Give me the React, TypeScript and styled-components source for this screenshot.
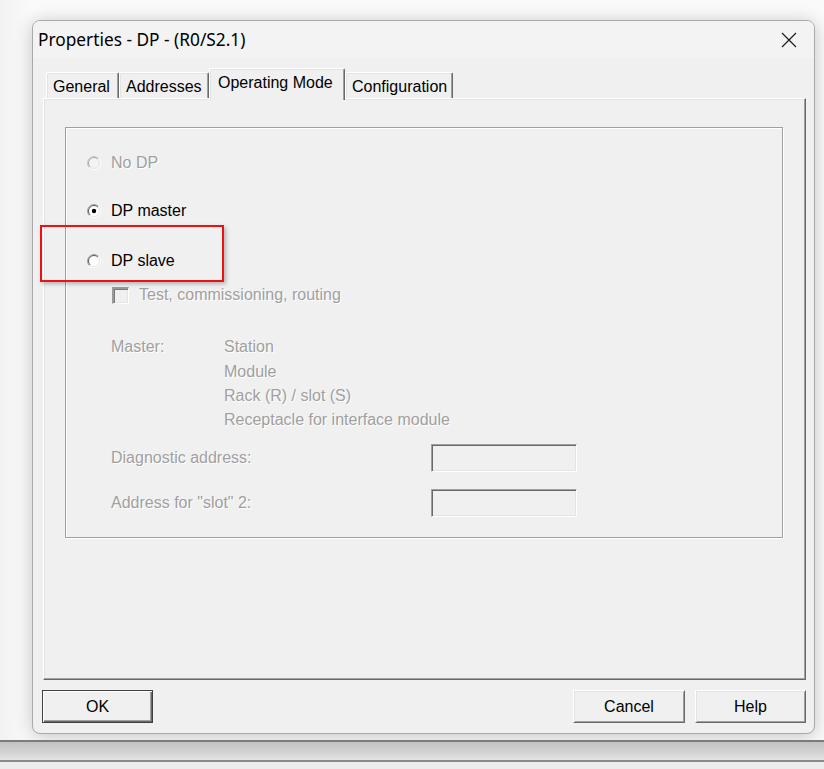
import React from "react";
import styled, { createGlobalStyle } from "styled-components";

const Global = createGlobalStyle`
  html, body { margin: 0; padding: 0; }
  body {
    background: #f8f8f8;
    font-family: "Liberation Sans", Arial, sans-serif;
    font-size: 16px;
    color: #000;
    overflow: hidden;
  }
`;

const Page = styled.div`
  width: 824px;
  height: 769px;
  display: flex;
  flex-direction: column;
  background: linear-gradient(90deg, #f2f2f2 0px, #fafafa 30px);
`;

const Stage = styled.div`
  padding: 20px 9px 0 32px;
  display: flex;
`;

const Window = styled.div`
  width: 783px;
  height: 714px;
  box-sizing: border-box;
  border: 1px solid #a9a9a9;
  border-radius: 8px;
  background: #f0f0f0;
  box-shadow: 0 2px 18px rgba(0, 0, 0, 0.22);
  display: flex;
  flex-direction: column;
  overflow: hidden;
`;

const TitleBar = styled.div`
  height: 37px;
  flex: none;
  background: #f3f3f3;
  display: flex;
  align-items: center;
  padding-left: 5px;
`;

const Title = styled.div`
  font-family: "Noto Sans", "Open Sans", sans-serif;
  font-size: 17.3px;
  color: #000;
  flex: 1;
  margin-top: -1px;
`;

const CloseBox = styled.div`
  width: 50px;
  height: 37px;
  display: flex;
  align-items: center;
  justify-content: center;
`;

const Body = styled.div`
  flex: 1;
  display: flex;
  flex-direction: column;
  padding: 10px 8px 0 10px;
`;

const TabStrip = styled.div`
  display: flex;
  align-items: flex-end;
  height: 30px;
  padding-left: 3px;
  position: relative;
  z-index: 1;
`;

const Tab = styled.div<{ $w: number; $active?: boolean }>`
  width: ${(p) => p.$w}px;
  box-sizing: border-box;
  height: ${(p) => (p.$active ? 32 : 26)}px;
  margin-bottom: ${(p) => (p.$active ? -2 : 0)}px;
  background: #f0f0f0;
  border-top: 1px solid #ffffff;
  border-left: 1px solid #ffffff;
  border-right: 1px solid #696969;
  border-radius: 2px 2px 0 0;
  box-shadow: inset -1px 0 0 #a0a0a0, inset 1px 1px 0 #e3e3e3;
  padding: ${(p) => (p.$active ? "4px 0 0 8px" : "4px 0 0 6px")};
  font-size: 16px;
  line-height: 20px;
  white-space: nowrap;
  color: #000;
`;

const Panel = styled.div`
  height: 582px;
  box-sizing: border-box;
  border-top: 1px solid #ffffff;
  border-left: 1px solid #ffffff;
  border-right: 1px solid #696969;
  border-bottom: 1px solid #696969;
  box-shadow: inset -1px -1px 0 #a0a0a0, inset 1px 1px 0 #e3e3e3;
  padding: 28px 22px 0 21px;
`;

const Group = styled.div`
  position: relative;
  height: 411px;
  box-sizing: border-box;
  border: 1px solid #a0a0a0;
  box-shadow: 1px 1px 0 #ffffff, inset 1px 1px 0 #ffffff;
  padding: 25px 0 0 21px;
  display: flex;
  flex-direction: column;
`;

const Row = styled.div<{ $mt?: number; $ml?: number; $gap?: number }>`
  display: flex;
  align-items: center;
  height: 20px;
  margin-top: ${(p) => p.$mt ?? 0}px;
  margin-left: ${(p) => p.$ml ?? 0}px;
  gap: ${(p) => p.$gap ?? 10}px;
`;

const Label = styled.span<{ $disabled?: boolean }>`
  font-size: 16px;
  line-height: 20px;
  white-space: nowrap;
  color: ${(p) => (p.$disabled ? "#a0a0a0" : "#000")};
  text-shadow: ${(p) => (p.$disabled ? "1px 1px 0 #ffffff" : "none")};
`;

const CheckBox = styled.div`
  width: 17px;
  height: 17px;
  box-sizing: border-box;
  border-top: 2px solid #9a9a9a;
  border-left: 2px solid #9a9a9a;
  border-right: 1px solid #ffffff;
  border-bottom: 1px solid #ffffff;
  box-shadow: inset 1px 1px 0 #7a7a7a, inset -1px -1px 0 #e3e3e3;
  background: #f0f0f0;
`;

const MasterGrid = styled.div`
  display: grid;
  grid-template-columns: 113px auto;
  grid-template-rows: 24px 25px 24px 24px;
  align-items: center;
  margin: 30px 0 0 24px;
`;

const FieldGrid = styled.div`
  display: grid;
  grid-template-columns: 320px 146px;
  grid-auto-rows: 28px;
  row-gap: 17px;
  align-items: center;
  margin: 12px 0 0 24px;
`;

const FieldBox = styled.div`
  width: 146px;
  height: 28px;
  box-sizing: border-box;
  border-top: 1px solid #a0a0a0;
  border-left: 1px solid #a0a0a0;
  border-right: 1px solid #ffffff;
  border-bottom: 1px solid #ffffff;
  box-shadow: inset 1px 1px 0 #696969, inset -1px -1px 0 #e3e3e3;
  background: #f0f0f0;
`;

const Highlight = styled.div`
  position: absolute;
  left: -26px;
  top: 97px;
  width: 184px;
  height: 57px;
  box-sizing: border-box;
  border: 2px solid #f01010;
  box-shadow: 2px 2px 4px rgba(0, 0, 0, 0.25);
  pointer-events: none;
`;

const ButtonRow = styled.div`
  display: flex;
  margin-top: 10px;
  margin-left: -1px;
  gap: 10px;
`;

const Spacer = styled.div`
  flex: 1;
`;

const Button = styled.div<{ $default?: boolean; $w: number }>`
  width: ${(p) => p.$w}px;
  height: 33px;
  box-sizing: border-box;
  background: #f0f0f0;
  display: flex;
  align-items: center;
  justify-content: center;
  font-size: 16px;
  color: #000;
  border-top: 1px solid ${(p) => (p.$default ? "#404040" : "#ffffff")};
  border-left: 1px solid ${(p) => (p.$default ? "#404040" : "#ffffff")};
  border-right: 1px solid ${(p) => (p.$default ? "#404040" : "#696969")};
  border-bottom: 1px solid ${(p) => (p.$default ? "#404040" : "#696969")};
  box-shadow: ${(p) =>
    p.$default
      ? "inset 1px 1px 0 #ffffff, inset -1px -1px 0 #696969, inset -2px -2px 0 #a0a0a0"
      : "inset 1px 1px 0 #e3e3e3, inset -1px -1px 0 #a0a0a0"};
`;

const Bands = styled.div`
  margin-top: 6px;
  flex: 1;
  display: flex;
  flex-direction: column;
`;

const Band = styled.div`
  height: 18px;
  border-top: 2px solid #7c7c7c;
  border-bottom: 2px solid #8a8a8a;
  background: linear-gradient(#c2c2c2, #d4d4d4 60%, #e4e4e4);
`;

const BandRest = styled.div`
  flex: 1;
  background: #ececec;
`;

const RadioSvg = styled.svg`
  flex: none;
`;

const Radio: React.FC<{ checked?: boolean; disabled?: boolean }> = ({ checked, disabled }) => (
  <RadioSvg width="14" height="14" viewBox="0 0 14 14">
    <circle cx="7" cy="7" r="5.5" fill={disabled ? "#f3f3f3" : "#ffffff"} />
    <path d="M11.6 2.4 A6.5 6.5 0 0 0 2.4 11.6" fill="none" stroke={disabled ? "#c4c4c4" : "#a0a0a0"} strokeWidth="1" />
    <path d="M10.9 3.1 A5.5 5.5 0 0 0 3.1 10.9" fill="none" stroke={disabled ? "#a8a8a8" : "#5a5a5a"} strokeWidth="1" />
    <path d="M11.6 2.4 A6.5 6.5 0 0 1 2.4 11.6" fill="none" stroke="#ffffff" strokeWidth="1" />
    <path d="M10.9 3.1 A5.5 5.5 0 0 1 3.1 10.9" fill="none" stroke="#e3e3e3" strokeWidth="1" />
    {checked && <circle cx="7" cy="7" r="2.2" fill="#000" />}
  </RadioSvg>
);

const CloseIcon = () => (
  <svg width="16" height="16" viewBox="0 0 16 16">
    <path d="M1 1 L15 15 M15 1 L1 15" stroke="#1a1a1a" strokeWidth="1.2" fill="none" />
  </svg>
);

export default function App() {
  return (
    <Page>
      <Global />
      <Stage>
        <Window>
          <TitleBar>
            <Title>Properties - DP - (R0/S2.1)</Title>
            <CloseBox>
              <CloseIcon />
            </CloseBox>
          </TitleBar>
          <Body>
            <TabStrip>
              <Tab $w={73}>General</Tab>
              <Tab $w={90}>Addresses</Tab>
              <Tab $w={136} $active>
                Operating Mode
              </Tab>
              <Tab $w={108}>Configuration</Tab>
            </TabStrip>
            <Panel>
              <Group>
                <Row>
                  <Radio disabled />
                  <Label $disabled>No DP</Label>
                </Row>
                <Row $mt={28}>
                  <Radio checked />
                  <Label>DP master</Label>
                </Row>
                <Row $mt={30}>
                  <Radio />
                  <Label>DP slave</Label>
                </Row>
                <Row $mt={14} $ml={25} $gap={10}>
                  <CheckBox />
                  <Label $disabled>Test, commissioning, routing</Label>
                </Row>
                <MasterGrid>
                  <Label $disabled>Master:</Label>
                  <Label $disabled>Station</Label>
                  <span />
                  <Label $disabled>Module</Label>
                  <span />
                  <Label $disabled>Rack (R) / slot (S)</Label>
                  <span />
                  <Label $disabled>Receptacle for interface module</Label>
                </MasterGrid>
                <FieldGrid>
                  <Label $disabled>Diagnostic address:</Label>
                  <FieldBox />
                  <Label $disabled>Address for "slot" 2:</Label>
                  <FieldBox />
                </FieldGrid>
                <Highlight />
              </Group>
            </Panel>
            <ButtonRow>
              <Button $w={111} $default>
                OK
              </Button>
              <Spacer />
              <Button $w={112}>Cancel</Button>
              <Button $w={111}>Help</Button>
            </ButtonRow>
          </Body>
        </Window>
      </Stage>
      <Bands>
        <Band />
        <BandRest />
      </Bands>
    </Page>
  );
}
